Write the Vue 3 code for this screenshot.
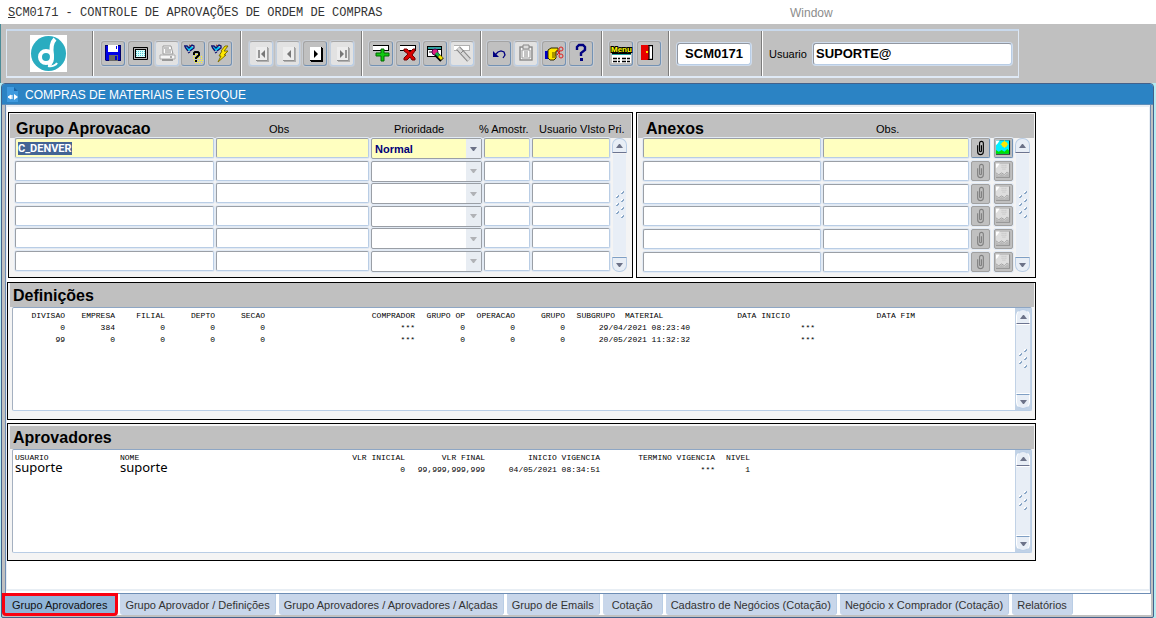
<script setup>
import { onMounted, ref } from 'vue'

const page = (inner, on) =>
  `<rect x="8" y="7" width="12" height="14" fill="${on ? '#000' : '#b0b0b0'}"/><rect x="7" y="6" width="12" height="14" fill="${on ? '#fff' : '#ededed'}"/><rect x="7" y="19" width="12" height="1" fill="${on ? '#000' : '#909090'}"/><rect x="18" y="6" width="1" height="14" fill="${on ? '#000' : '#a0a0a0'}"/>${inner}`

const torch =
  '<path d="M5 6l2 4 4-1 1-3-3-1-2 1z" fill="#00d0f8"/><path d="M3 5h3l2 2 3-3 2 1v2l-4 3M4 6l3 4M7 12l2-1" fill="none" stroke="#101070" stroke-width="1.3"/><path d="M8 4l2 1" stroke="#8a2020"/>'

const slip = (c, f) => `<rect x="4" y="4" width="16" height="6" fill="${c}"/><rect x="4" y="5" width="15" height="4" fill="${f}"/>`

const icons = {
  save: '<path d="M4 4h16v16H5l-1-1z" fill="#00006a"/><path d="M5 5h14v14H5z" fill="#0000e8"/><path d="M7 4h10v7H7z" fill="#fff"/><path d="M15 5h1v3h-1z" fill="#0000e8"/><path d="M8 14h9v6H8z" fill="#686868"/><path d="M14 15h2v4h-2z" fill="#0000d0"/>',
  screen: '<rect x="5" y="6" width="15" height="13" rx="1" fill="#000"/><path d="M6 7h13v11H6z" fill="#b0b0b0"/><path d="M7 8h11v9H7z" fill="#000"/><path d="M8 9h9v7H8z" fill="#d8ffff"/><path d="M8 10.5h9M8 12.5h9M8 14.5h9" stroke="#50c8d0" stroke-dasharray="1 1"/>',
  print: '<path d="M8 5h8l2 8H8z" fill="#fff" stroke="#999"/><path d="M9 7h5M10 9h6M10 11h6" stroke="#888"/><path d="M5 14h15v4H5z" fill="#f6f6f6" stroke="#aaa"/><path d="M7 18h11v2H7z" fill="#999"/><path d="M15 16h2" stroke="#666"/>',
  query: torch + '<path d="M12 13.5h8M12 15.5h10M12 17.5h10M13 19.5h9M14 21.5h8" stroke="#ffff20" stroke-dasharray="1 1"/><path d="M13 14v-2l1-1h3l1 1v2l-3 3v1M15 19v2" fill="none" stroke="#000" stroke-width="2"/>',
  run: torch + '<path d="M17 5h3l-4 5h4l-4 4h2l-8 7 3-6h-2l3-5h-1z" fill="#ffe800" stroke="#807000"/>',
  first: page('<path d="M10 9v8" stroke="#777" stroke-width="1.5"/><path d="M16 9v8l-4-4z" fill="#777"/>'),
  prev: page('<path d="M15 9v8l-4-4z" fill="#777"/>'),
  next: page('<path d="M11 9v8l4-4z" fill="#000"/>', true),
  last: page('<path d="M16 9v8" stroke="#777" stroke-width="1.5"/><path d="M10 9v8l4-4z" fill="#777"/>'),
  add: slip('#000', '#fff') + '<path d="M12 8h3v4h5v3h-5v5h-3v-5H7v-3h5z" fill="#10c810" stroke="#006800"/>',
  del: slip('#000', '#fff') + '<path d="M8 8h3l3 3 3-3h2v2l-3 4 3 3v2h-3l-2-3-3 3H8v-2l4-4-4-3z" fill="#d80000" stroke="#700000"/>',
  lock: '<path d="M4 5h15v11H4z" fill="#000"/><path d="M5 6h13v2H5z" fill="#30a0a0"/><path d="M5 9h13v6H5z" fill="#fff"/><path d="M6 10h3v2H6z" fill="#888"/><circle cx="12" cy="11" r="3" fill="#e02080" stroke="#500050"/><path d="M13 13l6 6" stroke="#000" stroke-width="5"/><path d="M13 12l3 3" stroke="#10b040" stroke-width="3"/><path d="M16 15l3 3" stroke="#f0e000" stroke-width="3"/>',
  clear: slip('#b0b0b0', '#fff') + '<path d="M8 7l11 12" stroke="#888" stroke-width="5"/><path d="M8 7l11 12" stroke="#d8d8d8" stroke-width="3"/><path d="M11 12l3-3" stroke="#888"/>',
  undo: '<path d="M7 15l4-4 3-1 3 1 1 3-2 3" fill="none" stroke="#000080" stroke-width="1.3"/><path d="M6 10v6h6z" fill="#000080"/>',
  paste: '<path d="M5 5h14v15H5z" fill="#f8f8f8"/><path d="M6 6h12v13H6z" fill="none" stroke="#888" stroke-width="1.5"/><path d="M9 4h6v4H9z" fill="#ddd" stroke="#888"/><path d="M8 9h8v8H8z" fill="#fff" stroke="#999"/><path d="M10 11h4M10 13h4M10 15h4" stroke="#888"/>',
  cut: '<path d="M3 10h3v8H3z" fill="#0000c8"/><path d="M6 9l3-2h7v3h-2v7l-2 2H8l-2-2z" fill="#ffe800" stroke="#302800"/><path d="M10 12h4M10 14h4M10 16h3" stroke="#504000"/><path d="M15 9l3 4M15 14l3-4" fill="none" stroke="#e00000"/><circle cx="19" cy="8" r="2" fill="none" stroke="#e02020"/><circle cx="19" cy="15" r="2" fill="none" stroke="#e02020"/>',
  help: '<path d="M8 9V6l2-2h4l2 2v3l-4 3v3" fill="none" stroke="#000080" stroke-width="2.4"/><path d="M11 17h3v3h-3z" fill="#000080"/>',
  menu: '<rect x="3" y="13" width="19" height="9" fill="#fff"/><path d="M3 12h19v1H3z" fill="#000"/><path d="M3 13h19v1H3z" fill="#20a0a0"/><path d="M4 17.5h7M13 17.5h8M4 20.5h7M13 20.5h8" stroke="#000" stroke-dasharray="4 1" stroke-width="1.5"/><text x="2" y="11" font-family="Liberation Sans, sans-serif" font-size="8" font-weight="700" fill="#ffff00" stroke="#000" stroke-width="2" paint-order="stroke">Menu</text>',
  exit: '<path d="M5 4h11v15H5z" fill="#000"/><path d="M11 5h4v13h-4z" fill="#c8c8c8"/><path d="M13 6h2v11h-2z" fill="#fff"/><path d="M4 4h7l1 2v12l-2 1H4z" fill="#e80000"/><path d="M12 5v14" stroke="#000"/><path d="M9 10h2v2H9z" fill="#ffe000"/>',
}

const groups = [
  { cls: 'g-file', items: [['save', 'Salvar'], ['screen', 'Tela'], ['print', 'Imprimir', 1], ['query', 'Entrar consulta'], ['run', 'Executar consulta']] },
  { cls: 'g-nav', items: [['first', 'Primeiro', 1], ['prev', 'Anterior', 1], ['next', 'Próximo'], ['last', 'Último', 1]] },
  { cls: 'g-rec', items: [['add', 'Inserir'], ['del', 'Excluir'], ['lock', 'Localizar'], ['clear', 'Limpar', 1]] },
  { cls: 'g-edit', items: [['undo', 'Desfazer'], ['paste', 'Colar', 1], ['cut', 'Recortar'], ['help', 'Ajuda']] },
  { cls: 'g-app', items: [['menu', 'Menu'], ['exit', 'Sair']] },
]

const groupRows = ref([
  { name: 'C_DENVER', prio: 'Normal' },
  ...Array.from({ length: 5 }, () => ({ name: '', prio: '' })),
])

const defCols = [50, 50, 50, 50, 50, 150, 50, 50, 50, 50, 75, 125, 100]
const defHead = ['DIVISAO', 'EMPRESA', 'FILIAL', 'DEPTO', 'SECAO', 'COMPRADOR', 'GRUPO OP', 'OPERACAO', 'GRUPO', 'SUBGRUPO', 'MATERIAL', 'DATA INICIO', 'DATA FIM']
const defRows = [
  { cells: ['0', '384', '0', '0', '0', '***', '0', '0', '0'], date: '29/04/2021 08:23:40' },
  { cells: ['99', '0', '0', '0', '0', '***', '0', '0', '0'], date: '20/05/2021 11:32:32' },
]

const apCols = [105, 175, 110, 80, 115, 115, 35]
const apHead = ['USUARIO', 'NOME', 'VLR INICIAL', 'VLR FINAL', 'INICIO VIGENCIA', 'TERMINO VIGENCIA', 'NIVEL']
const apRow = ['suporte', 'suporte', '0', '99,999,999,999', '04/05/2021 08:34:51', '***', '1']

const tabs = ['Grupo Aprovadores', 'Grupo Aprovador / Definições', 'Grupo Aprovadores / Aprovadores / Alçadas', 'Grupo de Emails', 'Cotação', 'Cadastro de Negócios (Cotação)', 'Negócio x Comprador (Cotação)', 'Relatórios']
const active = ref(0)

const firstField = ref([])
onMounted(() => {
  const el = firstField.value[0]
  el.focus()
  el.select()
})

const sum = (a) => a.reduce((x, y) => x + y, 0)
</script>

<template>
  <div class="app">
    <header class="menubar">
      <h1><u>S</u>CM0171 - CONTROLE DE APROVAÇÕES DE ORDEM DE COMPRAS</h1>
      <a href="#" class="win-menu">Window</a>
    </header>

    <div class="toolbar">
      <div class="frame">
        <div class="sect g-logo">
          <svg class="logo" viewBox="0 0 37 37" aria-hidden="true">
            <rect width="37" height="37" fill="#fff" />
            <circle cx="18.5" cy="18.5" r="17.5" fill="#2aacc0" />
            <circle cx="16" cy="22" r="6" fill="none" stroke="#fff" stroke-width="4" />
            <path d="M25 4c-4 4-4 10-3 16 0 5 0 8-4 10" fill="none" stroke="#fff" stroke-width="4" />
            <path d="M18 31c4 1 8-1 9-3" fill="none" stroke="#fff" stroke-width="2" />
          </svg>
        </div>
        <div v-for="g in groups" :key="g.cls" class="sect" :class="g.cls">
          <button v-for="i in g.items" :key="i[0]" type="button" class="tool" :class="{ off: i[2] }" :disabled="!!i[2]" :aria-label="i[1]">
            <svg viewBox="1 1 22 23" v-html="icons[i[0]]"></svg>
          </button>
        </div>
        <div class="sect g-code"><input class="box code" value="SCM0171" aria-label="Programa" /></div>
        <div class="sect g-user">
          <label for="usuario">Usuario</label>
          <input id="usuario" class="box user" value="SUPORTE@" />
        </div>
      </div>
    </div>

    <main class="window">
      <div class="titlebar">
        <svg viewBox="0 0 12 15" aria-hidden="true">
          <path d="M0 0h7l4 4v11H0z" fill="#3f9ade" />
          <path d="M7 0v4h4" fill="#1c66a8" />
          <path d="M1 10l3-2v4zM5 8v4" fill="#fff" stroke="#fff" />
          <path d="M7 7l4 3-4 3z" fill="#fff" />
        </svg>
        <h2>COMPRAS DE MATERIAIS E ESTOQUE</h2>
      </div>

      <div class="pane">
        <div class="content">
          <div class="upper">
            <section class="panel">
              <div class="head head-group">
                <h3>Grupo Aprovacao</h3><span>Obs</span><span>Prioridade</span><span>% Amostr.</span><span>Usuario VIsto Pri.</span>
              </div>
              <div class="body">
                <div class="rows">
                  <div v-for="(r, n) in groupRows" :key="n" class="row row-group" :class="{ current: n === 0 }">
                    <input ref="firstField" v-model="r.name" class="field" aria-label="Grupo Aprovacao" />
                    <input class="field" aria-label="Obs" />
                    <div class="combo">
                      <select v-model="r.prio" aria-label="Prioridade" :disabled="n > 0">
                        <option value=""></option>
                        <option>Normal</option>
                      </select>
                      <span class="drop"><svg viewBox="0 0 7 4"><path d="M0 0h7L4 4H3z" /></svg></span>
                    </div>
                    <input class="field" aria-label="% Amostr." />
                    <input class="field" aria-label="Usuario VIsto Pri." />
                  </div>
                </div>
                <div class="scroll">
                  <button type="button" class="up" aria-label="Subir"><svg viewBox="0 0 7 4"><path d="M3 0h1l3 4H0z" /></svg></button>
                  <div class="track"><i v-for="k in 7" :key="k"></i></div>
                  <button type="button" class="down" aria-label="Descer"><svg viewBox="0 0 7 4"><path d="M0 0h7L4 4H3z" /></svg></button>
                </div>
              </div>
            </section>

            <section class="panel">
              <div class="head head-anexo"><h3>Anexos</h3><span>Obs.</span></div>
              <div class="body">
                <div class="rows">
                  <div v-for="n in 6" :key="n" class="row row-anexo" :class="{ current: n === 1 }">
                    <input class="field" aria-label="Anexo" />
                    <input class="field" aria-label="Obs." />
                    <button type="button" class="mini" :disabled="n > 1" aria-label="Anexar">
                      <svg viewBox="0 0 18 18"><path d="M6 6v7q0 3 3 3t3-3V4q0-2-2-2T8 4v8q0 1 1 1t1-1V6" fill="none" :stroke="n > 1 ? '#808080' : '#000'" stroke-width="1.2" /></svg>
                    </button>
                    <button type="button" class="mini" :disabled="n > 1" aria-label="Ver imagem">
                      <svg v-if="n === 1" viewBox="0 0 18 18">
                        <path d="M1 1h15v15H1z" fill="#000" /><path d="M1 1h14v14H1z" fill="#00f0ff" />
                        <path d="M1 1h4L3 4 1 6z" fill="#fff" /><circle cx="10" cy="5" r="3" fill="#ffe800" />
                        <path d="M10 1v8M6 5h8" stroke="#ffe800" /><path d="M1 11l3 2 3-2 3 2 3-3 2 2v3H1z" fill="#00e000" />
                      </svg>
                      <svg v-else viewBox="0 0 18 18">
                        <path d="M1 1h15v15H1z" fill="#808080" /><path d="M1 1h14v14H1z" fill="#dedede" />
                        <path d="M1 1h4L3 4 1 6z" fill="#fff" /><path d="M7 3h6M7 5h6M8 7h4" stroke="#bbb" stroke-dasharray="1 1" />
                        <path d="M1 12l3 2 3-2 3 2 3-3 2 2v2H1z" fill="#b8b8b8" /><path d="M1 11l3 2 3-2 3 2 3-3 2 2" fill="none" stroke="#a0a0a0" />
                      </svg>
                    </button>
                  </div>
                </div>
                <div class="scroll">
                  <button type="button" class="up" aria-label="Subir"><svg viewBox="0 0 7 4"><path d="M3 0h1l3 4H0z" /></svg></button>
                  <div class="track"><i v-for="k in 7" :key="k"></i></div>
                  <button type="button" class="down" aria-label="Descer"><svg viewBox="0 0 7 4"><path d="M0 0h7L4 4H3z" /></svg></button>
                </div>
              </div>
            </section>
          </div>

          <section class="panel list-panel">
            <div class="head"><h3>Definições</h3></div>
            <div class="list">
              <div class="sheet">
                <table :style="{ width: sum(defCols) + 'px' }">
                  <colgroup><col v-for="(w, i) in defCols" :key="i" :style="{ width: w + 'px' }" /></colgroup>
                  <thead>
                    <tr><th v-for="h in defHead" :key="h" :class="{ indent: h === 'MATERIAL', inset: h === 'DATA INICIO' }">{{ h }}</th></tr>
                  </thead>
                  <tbody>
                    <tr v-for="r in defRows" :key="r.date">
                      <td v-for="(c, i) in r.cells" :key="i">{{ c }}</td>
                      <td colspan="2">{{ r.date }}</td>
                      <td>***</td>
                      <td></td>
                    </tr>
                  </tbody>
                </table>
              </div>
              <div class="scroll in-list">
                <button type="button" class="up" aria-label="Subir"><svg viewBox="0 0 7 4"><path d="M3 0h1l3 4H0z" /></svg></button>
                <div class="track"><i v-for="k in 5" :key="k"></i></div>
                <button type="button" class="down" aria-label="Descer"><svg viewBox="0 0 7 4"><path d="M0 0h7L4 4H3z" /></svg></button>
              </div>
            </div>
          </section>

          <section class="panel list-panel last">
            <div class="head"><h3>Aprovadores</h3></div>
            <div class="list">
              <div class="sheet">
                <table :style="{ width: sum(apCols) + 'px' }">
                  <colgroup><col v-for="(w, i) in apCols" :key="i" :style="{ width: w + 'px' }" /></colgroup>
                  <thead>
                    <tr><th v-for="(h, i) in apHead" :key="h" :class="{ left: i < 2 }">{{ h }}</th></tr>
                  </thead>
                  <tbody>
                    <tr><td v-for="(c, i) in apRow" :key="i" :class="{ left: i < 2, who: i < 2 }">{{ c }}</td></tr>
                  </tbody>
                </table>
              </div>
              <div class="scroll in-list">
                <button type="button" class="up" aria-label="Subir"><svg viewBox="0 0 7 4"><path d="M3 0h1l3 4H0z" /></svg></button>
                <div class="track"><i v-for="k in 5" :key="k"></i></div>
                <button type="button" class="down" aria-label="Descer"><svg viewBox="0 0 7 4"><path d="M0 0h7L4 4H3z" /></svg></button>
              </div>
            </div>
          </section>
        </div>
      </div>

      <nav class="tabs" role="tablist">
        <button v-for="(t, i) in tabs" :key="t" type="button" role="tab" :aria-selected="i === active" :class="{ active: i === active }" @click="active = i">{{ t }}</button>
      </nav>
    </main>
  </div>
</template>

<style>
body {
  background: #b4ecf2;
}
</style>

<style scoped>
* {
  box-sizing: border-box;
}
h1, h2, h3 {
  margin: 0;
}
button, input, select {
  margin: 0;
  padding: 0;
  font-family: inherit;
  border-radius: 0;
}
.app {
  display: flex;
  flex-direction: column;
  min-height: 100vh;
  font-family: "Liberation Sans", Arial, sans-serif;
  font-size: 11px;
  color: #000;
}
.menubar {
  display: flex;
  align-items: center;
  height: 24px;
  padding-left: 8px;
  background: #fff;
}
.menubar h1 {
  flex: 0 0 782px;
  padding-top: 1px;
  font: 400 12px/16px "Liberation Mono", "Courier New", monospace;
  color: #333;
}
.win-menu {
  padding-top: 2px;
  font-size: 12px;
  color: #8c8c8c;
  text-decoration: none;
}
.toolbar {
  padding: 5px 6px 5px 5px;
  background: #c0c0c0;
  border-left: 1px solid #4a8c98;
}
.frame {
  display: flex;
  width: fit-content;
  height: 49px;
  border: 1px solid #dfe9f5;
  border-top: 2px solid #c9d9ec;
  border-bottom-width: 2px;
}
.sect {
  display: flex;
  align-items: center;
  justify-content: space-between;
  border-left: 1px solid #fff;
  box-shadow: -1px 0 #7c7c7c;
}
.sect:first-child {
  border-left: 0;
  box-shadow: none;
}
.g-logo { width: 86px; padding-left: 23px; }
.g-file { width: 148px; padding: 0 9px 0 7px; }
.g-nav { width: 121px; padding: 0 8px 0 7px; }
.g-rec { width: 119px; padding: 0 7px 0 6px; }
.g-edit { width: 121px; padding: 0 9px 0 5px; }
.g-app { width: 67px; padding: 0 8px 0 6px; }
.g-code { width: 93px; padding: 0 10px 0 7px; }
.g-user { width: 256px; padding: 0 6px; }
.logo {
  width: 37px;
  height: 37px;
}
.tool {
  width: 24px;
  height: 25px;
  border: 1px solid;
  border-color: #a4a4a4 #7392b4 #7392b4 #a4a4a4;
  border-radius: 3px;
  background: #c0c0c0;
  box-shadow: 0 0 0 1px #c8cdd4;
}
.tool.off {
  background: #e2e2e2;
  border-color: #a8a8a8 #b9cde5 #b9cde5 #c2cfde;
}
.tool svg {
  display: block;
  width: 22px;
  height: 23px;
  overflow: visible;
}
.box {
  height: 22px;
  background: #fff;
  border: 1px solid;
  border-color: #9096a0 #b9cde5 #b9cde5 #9096a0;
  border-radius: 3px;
  box-shadow: 0 0 0 1px #cfdcec;
  font-size: 13px;
  font-weight: 700;
  color: #000;
}
.code {
  width: 74px;
  text-align: center;
}
.user {
  width: 199px;
  padding-left: 2px;
}
.window {
  flex: 1;
  display: flex;
  flex-direction: column;
  margin: 0 2px 0 1px;
  padding-bottom: 2px;
  background: #c0c0c0;
  border: 1px solid #44618a;
  border-radius: 4px 4px 2px 2px;
}
.titlebar {
  display: flex;
  align-items: center;
  gap: 6px;
  height: 21px;
  padding-left: 5px;
  background: #2b83c4;
  border-bottom: 1px solid #5d8db8;
  border-radius: 3px 3px 0 0;
}
.titlebar svg {
  width: 12px;
  height: 15px;
}
.titlebar h2 {
  padding-top: 1px;
  font-size: 12px;
  font-weight: 400;
  color: #fff;
}
.pane {
  flex: 1;
  margin: 0 2px 0 3px;
  background: #fff;
  border: 1px solid #6d8db5;
  border-top: 0;
}
.content {
  min-height: 100%;
  padding: 5px 113px 28px 0;
  border: 1px solid #e8eef4;
  border-top-width: 2px;
  border-bottom-width: 2px;
}
.upper {
  display: grid;
  grid-template-columns: 625fr 400fr;
  gap: 3px;
  padding-left: 1px;
}
.panel {
  padding: 1px;
  background: #f4f4f4;
  border: 1px solid #000;
}
.head {
  display: grid;
  align-items: center;
  height: 24px;
  padding: 6px 0 0 6px;
  background: #c0c0c0;
  line-height: 14px;
  white-space: nowrap;
}
.head h3 {
  font-size: 16px;
  line-height: 18px;
}
.head span {
  margin-bottom: 1px;
}
.head-group {
  grid-template-columns: 253fr 125fr 85fr 60fr 92fr;
}
.head-anexo {
  padding-left: 8px;
  grid-template-columns: 230fr 158fr;
}
.body {
  display: flex;
  gap: 2px;
  padding: 0 4px 4px 5px;
}
.rows {
  flex: 1;
  display: flex;
  flex-direction: column;
  justify-content: space-between;
  min-height: 134px;
}
.row {
  display: grid;
  gap: 2px;
}
.row-group {
  grid-template-columns: 199fr 153fr 111fr 46fr 78fr;
}
.row-anexo {
  grid-template-columns: 177fr 146fr 20px 20px;
}
.field, .combo, .mini {
  width: 100%;
  min-width: 0;
  height: 20px;
  background: #fff;
  border: 1px solid;
  border-color: #9a9fa6 #b9cde5 #b9cde5 #9a9fa6;
  border-radius: 2px;
  box-shadow: 0 0 0 1px #e2eaf4;
}
.field {
  padding-left: 2px;
  font-family: Roboto, "Liberation Sans", sans-serif;
  font-size: 11px;
  font-weight: 700;
  outline: 0;
}
.field::selection {
  background: #446494;
  color: #fff;
}
.combo {
  display: grid;
  grid-template-columns: 1fr 15px;
  height: 21px;
  border-color: #9a9fa6;
}
.combo select {
  grid-area: 1 / 1 / 2 / 3;
  appearance: none;
  padding-left: 3px;
  background: transparent;
  border: 0;
  font-size: 11px;
  font-weight: 700;
  color: #000078;
}
.drop {
  grid-area: 1 / 2;
  display: grid;
  place-items: center;
  background: #e8edf3;
  pointer-events: none;
}
.drop svg, .scroll svg {
  width: 7px;
  height: 4px;
  fill: #6c7288;
}
.drop svg {
  fill: #b0b2b6;
}
.current .drop svg {
  fill: #6c7288;
}
.current .field, .current .combo {
  background: #ffffc0;
}
.mini {
  width: 19px;
  background: #c0c0c0;
  border-color: #a0a0a0;
}
.mini:last-child {
  justify-self: end;
}
.current .mini {
  border-color: #a0a0a0 #6f8fb2 #6f8fb2 #a0a0a0;
}
.mini svg {
  display: block;
  width: 100%;
  height: 18px;
}
.scroll {
  display: flex;
  flex-direction: column;
  width: 15px;
}
.up, .down {
  display: grid;
  place-items: center;
  height: 15px;
  background: #e8eef6;
  border: 1px solid #b9cde5;
}
.up {
  border-radius: 7px 7px 0 0;
  border-bottom-color: #6c7490;
}
.down {
  border-radius: 0 0 7px 7px;
  border-top-color: #7f9fc4;
}
.track {
  flex: 1;
  display: grid;
  grid-template-columns: 8px;
  grid-auto-rows: 4px;
  place-content: center;
  margin: 1px;
  background: #e8eef6;
}
.track i {
  width: 3px;
  height: 3px;
  background: linear-gradient(135deg, #fff 45%, #8ba8c8 45%, #8ba8c8 70%, #e8eef6 70%);
}
.track i:nth-child(even) {
  justify-self: start;
}
.track i:nth-child(odd) {
  justify-self: end;
}
.list-panel {
  margin-top: 4px;
  padding: 0 1px 8px 2px;
}
.list-panel .head {
  padding: 2px 0 0 3px;
}
.list-panel.last {
  margin-top: 3px;
  padding-top: 2px;
  padding-bottom: 7px;
}
.list-panel.last .head {
  height: 23px;
  padding-top: 0;
}
.list {
  display: flex;
  height: 104px;
  margin: 0 2px;
  background: #fff;
  border: 1px solid;
  border-color: #8ea6c4 #b9cde5 #b9cde5 #a4b0c0;
  border-radius: 2px;
}
.sheet {
  flex: 1;
  overflow: hidden;
  padding: 2px 0 0 2px;
}
.in-list {
  width: 16px;
  padding: 1px;
  background: #c1d2e6;
}
.in-list .up, .in-list .down {
  border-left-color: #fff;
  border-right-color: #fff;
}
.in-list .track {
  margin: 0;
  border: 1px solid #fff;
  border-width: 1px 0;
}
table {
  table-layout: fixed;
  border-collapse: collapse;
  font: 400 8px/12px "Liberation Mono", "Courier New", monospace;
}
th, td {
  height: 12px;
  padding: 0;
  font-weight: 400;
  text-align: right;
  white-space: nowrap;
}
.left, .indent {
  text-align: left;
}
.indent {
  padding-left: 10px;
}
.inset {
  padding-right: 25px;
}
.who {
  font: 400 13px/6px "Noto Sans", sans-serif;
  vertical-align: top;
}
.tabs {
  display: flex;
  gap: 3px;
  height: 21px;
  margin: 0 2px 0 1px;
  background: #fff;
}
.tabs button {
  min-width: 60px;
  padding: 0 5px;
  background: #c8d6ea;
  border: 0;
  border-right: 1px solid #b9cde5;
  border-radius: 0 0 3px 3px;
  font-size: 11px;
  color: #333;
  white-space: nowrap;
}
.tabs button.active {
  padding: 0 9px;
  background: #8fb4d8;
  color: #111;
  outline: 3px solid #fa0010;
  outline-offset: -2px;
}
</style>
